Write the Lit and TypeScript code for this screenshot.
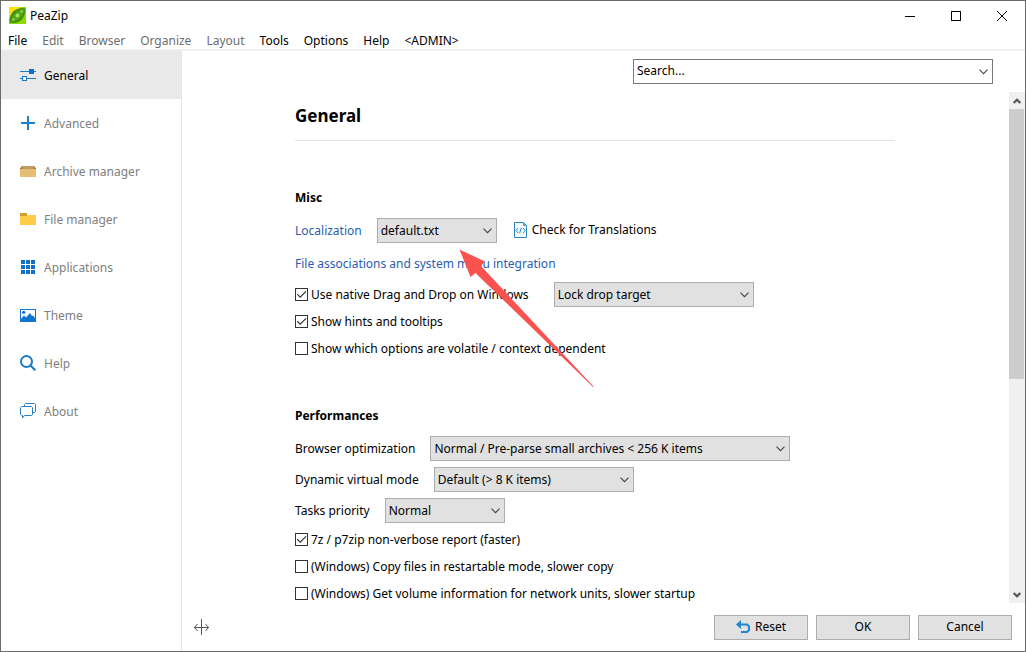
import { LitElement, html, css, svg } from "lit";
import { customElement, property, state } from "lit/decorators.js";

const fontStack = css`"Noto Sans", "Open Sans", sans-serif`;

const icons: Record<string, unknown> = {
  general: svg`
    <path d="M0 4.5H9M14 4.5H16M0 11.5H2M7 11.5H16" stroke="#1979ca" fill="none"/>
    <rect x="9" y="2" width="5" height="5" fill="#0f6fc8"/>
    <rect x="2.5" y="9.5" width="4" height="4" fill="#fff" stroke="#1979ca"/>`,
  advanced: svg`<path d="M8 1V15M1 8H15" stroke="#1c80cf" stroke-width="2" fill="none"/>`,
  archive: svg`
    <path d="M2 3H14L16 6H0Z" fill="#c19c5c"/>
    <path d="M2 3L0 6H2ZM14 3L16 6H14Z" fill="#8a6d3b"/>
    <rect y="6" width="16" height="8" fill="#e5bd73"/>`,
  folder: svg`
    <path d="M0 2H7V5H0Z" fill="#cf9e2b"/>
    <path d="M0 5H7L8 4H16V14H0Z" fill="#ffcd4a"/>`,
  apps: svg`<path d="M1 1h4v4h-4zM6 1h4v4h-4zM11 1h4v4h-4zM1 6h4v4h-4zM6 6h4v4h-4zM11 6h4v4h-4zM1 11h4v4h-4zM6 11h4v4h-4zM11 11h4v4h-4z" fill="#126fc6"/>`,
  theme: svg`
    <rect x=".5" y="2.5" width="15" height="12" fill="#fff" stroke="#1473cb"/>
    <circle cx="3.7" cy="5.3" r="1.6" fill="#1473cb"/>
    <path d="M1 14V12L4 8.5L6 10.5L10 6L12 9L13 8.5L15 11V14Z" fill="#0f75d3"/>`,
  help: svg`
    <circle cx="6.5" cy="6.5" r="5.5" stroke="#1c7ac8" stroke-width="2" fill="none"/>
    <path d="M10.5 10.5L15.3 15.3" stroke="#1c7ac8" stroke-width="2.2" fill="none"/>`,
  about: svg`
    <path d="M4.5 3.5V1.5L5.5 .5H14.5L15.5 1.5V8.5L14.5 9.5H12.5" stroke="#2b7fc0" fill="none"/>
    <path d="M1.5 3.5H11.5L12.5 4.5V11.5L11.5 12.5H4.5L2.5 15V12.5H1.5L.5 11.5V4.5Z" stroke="#2b7fc0" fill="#fff"/>`,
};

const pages = [
  { label: "General", icon: "general" },
  { label: "Advanced", icon: "advanced" },
  { label: "Archive manager", icon: "archive" },
  { label: "File manager", icon: "folder" },
  { label: "Applications", icon: "apps" },
  { label: "Theme", icon: "theme" },
  { label: "Help", icon: "help" },
  { label: "About", icon: "about" },
];

const menus = [
  { label: "File", on: true },
  { label: "Edit", on: false },
  { label: "Browser", on: false },
  { label: "Organize", on: false },
  { label: "Layout", on: false },
  { label: "Tools", on: true },
  { label: "Options", on: true },
  { label: "Help", on: true },
  { label: "<ADMIN>", on: true },
];

@customElement("option-check")
class OptionCheck extends LitElement {
  @property() label = "";
  @property({ type: Boolean }) checked = false;

  static styles = css`
    :host { display: block; }
    .row {
      display: flex;
      align-items: center;
      gap: 3px;
      min-height: 27px;
      white-space: nowrap;
    }
    .box {
      appearance: none;
      box-sizing: border-box;
      flex: none;
      width: 13px;
      height: 13px;
      margin: 0;
      border: 1px solid #333;
      background: #fff center / 11px 11px no-repeat;
    }
    .box:checked {
      background-image: url("data:image/svg+xml,%3Csvg xmlns='http://www.w3.org/2000/svg' viewBox='0 0 11 11'%3E%3Cpath d='M1.2 5.2L4.2 8.2L10 2.4' fill='none' stroke='%23333' stroke-width='1.2'/%3E%3C/svg%3E");
    }
  `;

  render() {
    return html`<label class="row">
      <input class="box" type="checkbox" .checked=${this.checked} />
      <span>${this.label}</span>
    </label>`;
  }
}

@customElement("option-select")
class OptionSelect extends LitElement {
  @property() label = "";
  @property() value = "";
  @property() size = "small";
  @property({ type: Boolean }) link = false;
  @property({ type: Boolean }) bare = false;

  static styles = css`
    :host { display: block; }
    .row {
      display: flex;
      align-items: center;
      gap: 15px;
      white-space: nowrap;
    }
    .link { color: #2a5db0; }
    .drop {
      appearance: none;
      box-sizing: border-box;
      height: 25px;
      padding: 0 24px 0 3px;
      border: 1px solid #adadad;
      border-radius: 0;
      color: #000;
      font: 12px/20px ${fontStack};
      background: #e1e1e1 right 4px center / 9px 6px no-repeat;
      background-image: url("data:image/svg+xml,%3Csvg xmlns='http://www.w3.org/2000/svg' viewBox='0 0 9 6'%3E%3Cpath d='M.5 .7L4.5 4.7L8.5 .7' fill='none' stroke='%23444' stroke-width='1.1'/%3E%3C/svg%3E");
    }
    .small { width: 120px; }
    .medium { width: 200px; }
    .large { width: 360px; }
  `;

  render() {
    const drop = html`<select id="drop" class="drop ${this.size}" aria-label=${this.label}>
      <option>${this.value}</option>
    </select>`;
    return this.bare
      ? drop
      : html`<div class="row">
          <label for="drop" class=${this.link ? "link" : ""}>${this.label}</label>${drop}
        </div>`;
  }
}

@customElement("app-root")
class AppRoot extends LitElement {
  @state() private page = "General";

  static styles = css`
    :host {
      display: flex;
      flex-direction: column;
      box-sizing: border-box;
      height: 100vh;
      border: 1px solid #6b6b6b;
      background: #fff;
      color: #000;
      font: 12px/20px ${fontStack};
      overflow: hidden;
    }
    button { font: inherit; color: inherit; border-radius: 0; }
    a { color: #2a5db0; text-decoration: none; }
    svg { display: block; flex: none; }

    .titlebar {
      display: flex;
      align-items: center;
      height: 29px;
      padding-left: 8px;
      gap: 4px;
    }
    .title { flex: 1; }
    .caption { display: flex; }
    .caption button {
      display: grid;
      place-items: center;
      width: 46px;
      height: 29px;
      padding: 0;
      border: 0;
      background: none;
    }
    .menubar {
      display: flex;
      align-items: flex-end;
      gap: 15px;
      height: 19px;
      padding-left: 7px;
      border-bottom: 2px solid #f0f0f0;
    }
    .menubar button {
      padding: 0;
      border: 0;
      background: none;
      line-height: 16px;
    }
    .menubar button:disabled { color: #6d6d6d; }

    .body { display: flex; flex: 1; min-height: 0; }
    .sidebar {
      flex: none;
      box-sizing: border-box;
      width: 181px;
      border-right: 1px solid #e5e5e5;
    }
    .nav {
      display: flex;
      align-items: center;
      gap: 8px;
      width: 100%;
      height: 48px;
      padding: 0 0 0 19px;
      border: 0;
      background: none;
      color: #808080;
      text-align: left;
    }
    .nav.current { background: #e9e9e9; color: #000; }
    .nav-label { padding-top: 2px; }

    .main { display: flex; flex-direction: column; flex: 1; min-width: 0; }
    .searchbar { display: flex; justify-content: flex-end; padding: 8px 32px; }
    .search {
      display: flex;
      box-sizing: border-box;
      width: 360px;
      height: 25px;
      border: 1px solid #7a7a7a;
    }
    .search input {
      flex: 1;
      min-width: 0;
      padding: 0 3px 2px;
      border: 0;
      outline: 0;
      background: none;
      color: #000;
      font: 12px/20px ${fontStack};
    }
    .search button {
      display: grid;
      place-items: center;
      width: 17px;
      padding: 0;
      border: 0;
      background: none;
    }

    .scroller { display: flex; flex: 1; min-height: 0; }
    .view { flex: 1; min-width: 0; padding-right: 1px; overflow: hidden; }
    .content { position: relative; max-width: 600px; margin: 0 auto; }
    h1 {
      margin: 0;
      padding: 11px 0;
      border-bottom: 1px solid #e5e5e5;
      font-size: 17px;
      line-height: 26px;
    }
    h2 { margin: 0; padding-bottom: 7px; font-size: 12px; line-height: 20px; }
    .misc { padding-top: 47px; }
    .perf { padding-top: 44px; }
    .row { display: flex; align-items: center; white-space: nowrap; }
    .combo { min-height: 31px; gap: 17px; }
    .links { min-height: 35px; }
    .tick { min-height: 27px; gap: 25px; }
    .check {
      display: flex;
      align-items: center;
      gap: 5px;
      padding: 0 0 2px;
      border: 0;
      background: none;
    }
    .pointer {
      position: absolute;
      left: 164px;
      top: 157px;
      pointer-events: none;
    }

    .scrollbar {
      display: flex;
      flex-direction: column;
      flex: none;
      width: 16px;
      background: #f0f0f0;
    }
    .scrollbar button {
      display: grid;
      place-items: center;
      height: 17px;
      padding: 0;
      border: 0;
      background: none;
    }
    .track { flex: 1; }
    .thumb { width: 15px; height: 56.6%; background: #cdcdcd; }

    .footer {
      display: flex;
      align-items: center;
      gap: 8px;
      height: 48px;
      padding: 0 13px 0 12px;
    }
    .grip { flex: 1; }
    .footer button {
      display: flex;
      align-items: center;
      justify-content: center;
      gap: 4px;
      box-sizing: border-box;
      width: 94px;
      height: 25px;
      padding: 0;
      border: 1px solid #adadad;
      background: #e1e1e1;
    }
  `;

  render() {
    return html`
      <header class="titlebar">
        <svg width="17" height="17" viewBox="0 0 17 17">
          <rect width="17" height="17" fill="#8edb00"/>
          <path d="M0 0H12L0 12Z" fill="#ffe000"/>
          <path d="M1 16C-1 8 5 0 16 1C17 10 12 17 1 16Z" fill="#3f8f0c"/>
          <path d="M1 16C3 8 8 3 16 1C15 9 9 14 1 16Z" fill="#57a818"/>
          <circle cx="8.5" cy="8.5" r="2" fill="#a4e04c"/>
          <circle cx="12.5" cy="4.5" r="1.1" fill="#a4e04c"/>
          <circle cx="4.5" cy="12.5" r="1.1" fill="#a4e04c"/>
        </svg>
        <span class="title">PeaZip</span>
        <div class="caption">
          <button aria-label="Minimize"><svg width="12" height="10"><path d="M1 5.5H11" stroke="#000"/></svg></button>
          <button aria-label="Maximize"><svg width="10" height="10"><rect x=".5" y=".5" width="9" height="9" fill="none" stroke="#000"/></svg></button>
          <button aria-label="Close"><svg width="10" height="10"><path d="M0 0L10 10M10 0L0 10" stroke="#000"/></svg></button>
        </div>
      </header>
      <nav class="menubar">
        ${menus.map((m) => html`<button ?disabled=${!m.on}>${m.label}</button>`)}
      </nav>
      <div class="body">
        <nav class="sidebar">
          ${pages.map(
            (p) => html`<button
              class="nav ${p.label === this.page ? "current" : ""}"
              @click=${() => (this.page = p.label)}
            ><svg width="16" height="16" viewBox="0 0 16 16">${icons[p.icon]}</svg><span class="nav-label">${p.label}</span></button>`
          )}
        </nav>
        <main class="main">
          <div class="searchbar">
            <div class="search">
              <input type="text" aria-label="Search" value="Search..." />
              <button aria-label="Show searches"><svg width="9" height="6" viewBox="0 0 9 6"><path d="M.5 .7L4.5 4.7L8.5 .7" fill="none" stroke="#444" stroke-width="1.1"/></svg></button>
            </div>
          </div>
          <div class="scroller">
            <div class="view">
              <div class="content">
                <h1>General</h1>
                <section class="misc">
                  <h2>Misc</h2>
                  <div class="row combo">
                    <option-select label="Localization" value="default.txt" link></option-select>
                    <button class="check">
                      <svg width="13" height="16" viewBox="0 0 13 16">
                        <path d="M.5 .5H9.5L12.5 3.5V15.5H.5Z" fill="#f4fafd" stroke="#2a87bd"/>
                        <path d="M9 0V4H13Z" fill="#5ba6d0"/>
                        <path d="M4 6L1.8 8.5L4 11M9 6L11.2 8.5L9 11M7.4 5.8L5.6 11.2" fill="none" stroke="#2a87bd"/>
                      </svg>
                      Check for Translations
                    </button>
                  </div>
                  <div class="row links"><a href="#integration">File associations and system menu integration</a></div>
                  <div class="row tick">
                    <option-check label="Use native Drag and Drop on Windows" checked></option-check>
                    <option-select label="Drop mode" value="Lock drop target" size="medium" bare></option-select>
                  </div>
                  <option-check label="Show hints and tooltips" checked></option-check>
                  <option-check label="Show which options are volatile / context dependent"></option-check>
                </section>
                <section class="perf">
                  <h2>Performances</h2>
                  <div class="row combo"><option-select label="Browser optimization" value="Normal / Pre-parse small archives < 256 K items" size="large"></option-select></div>
                  <div class="row combo"><option-select label="Dynamic virtual mode" value="Default (> 8 K items)" size="medium"></option-select></div>
                  <div class="row combo"><option-select label="Tasks priority" value="Normal"></option-select></div>
                  <option-check label="7z / p7zip non-verbose report (faster)" checked></option-check>
                  <option-check label="(Windows) Copy files in restartable mode, slower copy"></option-check>
                  <option-check label="(Windows) Get volume information for network units, slower startup"></option-check>
                </section>
                <svg class="pointer" width="136" height="138" viewBox="0 0 136 138">
                  <path d="M.5 .5L26 12.5L22 17L135 138L134 138L16.5 24L11.5 28Z" fill="#f9524f"/>
                </svg>
              </div>
            </div>
            <div class="scrollbar">
              <button aria-label="Scroll up"><svg width="8" height="6"><path d="M.7 5L4 1.7L7.3 5" fill="none" stroke="#505050" stroke-width="2"/></svg></button>
              <div class="track"><div class="thumb"></div></div>
              <button aria-label="Scroll down"><svg width="8" height="6"><path d="M.7 1L4 4.3L7.3 1" fill="none" stroke="#505050" stroke-width="2"/></svg></button>
            </div>
          </div>
          <footer class="footer">
            <div class="grip">
              <svg width="15" height="16" viewBox="0 0 15 16"><path d="M7.5 0V16M0 8.5H15M3.5 5L.5 8.5L3.5 12M11.5 5L14.5 8.5L11.5 12" fill="none" stroke="#555"/></svg>
            </div>
            <button><svg width="15" height="14" viewBox="0 0 15 14"><path d="M0 4.5L5 0V9Z" fill="#1f86d1"/><path d="M4 4.5H11L13 6.5V10L11 12H5" fill="none" stroke="#1f86d1" stroke-width="2"/></svg>Reset</button>
            <button>OK</button>
            <button>Cancel</button>
          </footer>
        </main>
      </div>
    `;
  }
}
